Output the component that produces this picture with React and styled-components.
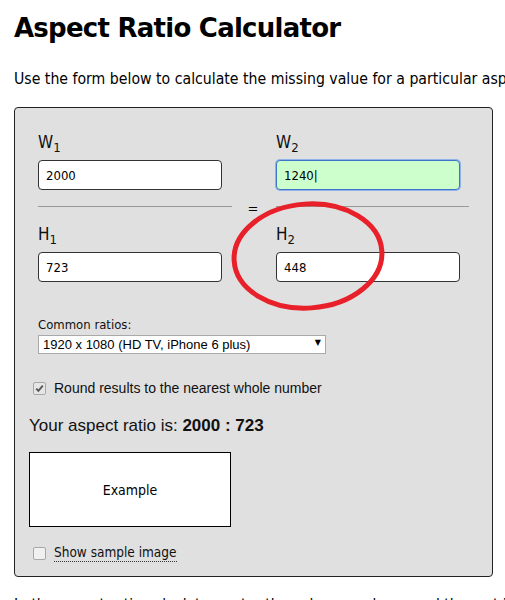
import React from "react";
import styled, { createGlobalStyle } from "styled-components";

const Global = createGlobalStyle`
  html, body { margin: 0; padding: 0; background: #fff; overflow: hidden; }
  body { font-family: "DejaVu Sans", Verdana, sans-serif; color: #000; }
`;

const Page = styled.div`
  position: relative;
  width: 505px;
  height: 600px;
  overflow: hidden;
  padding: 0 0 0 14px;
  box-sizing: border-box;
`;

const Title = styled.h1`
  margin: 0;
  padding-top: 13px;
  font-family: "DejaVu Sans", Verdana, sans-serif;
  font-weight: bold;
  font-size: 26px;
  line-height: 30px;
  letter-spacing: -0.75px;
`;

const Intro = styled.p`
  margin: 27px 0 0;
  font-family: "DejaVu Sans Condensed", "DejaVu Sans", Tahoma, sans-serif;
  font-size: 15.7px;
  line-height: 18px;
  white-space: nowrap;
`;

const Panel = styled.div`
  margin-top: 19px;
  width: 479px;
  box-sizing: border-box;
  background: #e0e0e0;
  border: 1px solid #222;
  border-radius: 4px;
  padding: 24px 0 14px 14px;
`;

const Grid = styled.div`
  display: grid;
  grid-template-columns: 194px 44px 193px;
  margin-left: 9px;
`;

const Field = styled.div`
  display: flex;
  flex-direction: column;
`;

const Label = styled.label`
  font-family: "DejaVu Sans Condensed", "DejaVu Sans", Tahoma, sans-serif;
  font-size: 17px;
  line-height: 20px;
  height: 28px;
  color: #111;
  sub {
    font-size: 13px;
    vertical-align: -4px;
    line-height: 0;
  }
`;

const TextInput = styled.input`
  width: 184px;
  height: 30px;
  box-sizing: border-box;
  border: 1px solid ${(p) => (p.$active ? "#3f75c8" : "#333")};
  border-radius: 4px;
  background: ${(p) => (p.$active ? "#ccffcc" : "#fff")};
  box-shadow: ${(p) => (p.$active ? "0 0 0 1px #8fb2ea" : "none")};
  padding: 0 7px;
  font-family: "DejaVu Sans Condensed", "DejaVu Sans", Tahoma, sans-serif;
  font-size: 13px;
  color: #000;
  outline: none;
`;

const DividerCell = styled.div`
  height: 34px;
  display: flex;
  align-items: center;
  justify-content: ${(p) => (p.$center ? "center" : "flex-start")};
`;

const Line = styled.div`
  width: ${(p) => p.$w}px;
  height: 1px;
  background: #999;
  margin-top: -1px;
`;

const Equals = styled.span`
  font-family: "DejaVu Sans", Verdana, sans-serif;
  font-size: 13px;
  margin-top: 3px;
  margin-left: -2px;
`;

const RatioBlock = styled.div`
  margin: 35px 0 0 9px;
`;

const SmallLabel = styled.div`
  font-family: "DejaVu Sans Condensed", "DejaVu Sans", Tahoma, sans-serif;
  font-size: 13px;
  line-height: 16px;
  color: #111;
  margin-bottom: 1px;
`;

const SelectWrap = styled.div`
  position: relative;
  width: 288px;
`;

const Select = styled.select`
  appearance: none;
  -webkit-appearance: none;
  width: 288px;
  height: 19px;
  box-sizing: border-box;
  border: 1px solid #a9a9a9;
  background: #fff;
  border-radius: 0;
  padding: 0 4px;
  font-family: "Liberation Sans", Arial, sans-serif;
  font-size: 13px;
  color: #000;
`;

const Arrow = styled.span`
  position: absolute;
  right: 5px;
  top: 3px;
  font-size: 8px;
  line-height: 12px;
  pointer-events: none;
`;

const CheckRow = styled.label`
  display: flex;
  align-items: center;
  gap: 8px;
  margin-left: 4px;
  margin-top: ${(p) => p.$mt}px;
  font-family: ${(p) =>
    p.$tahoma
      ? `"DejaVu Sans Condensed", "DejaVu Sans", Tahoma, sans-serif`
      : `"Liberation Sans", Arial, sans-serif`};
  font-size: ${(p) => (p.$tahoma ? "13.5px" : "14px")};
  color: #111;
`;

const Box = styled.span`
  width: 11px;
  height: 11px;
  border: 1px solid #a8a8a8;
  border-radius: 2px;
  background: ${(p) => (p.$checked ? "#e6e6e6" : "#f0f0f0")};
  display: flex;
  align-items: center;
  justify-content: center;
`;

const Dotted = styled.span`
  border-bottom: 1px dotted #333;
  line-height: 17px;
`;

const Result = styled.div`
  margin-top: 20px;
  font-family: "Liberation Sans", Arial, sans-serif;
  font-size: 17px;
  color: #111;
  b { font-weight: bold; }
`;

const Example = styled.div`
  margin-top: 16px;
  width: 202px;
  height: 75px;
  box-sizing: border-box;
  border: 1px solid #000;
  background: #fff;
  display: flex;
  align-items: center;
  justify-content: center;
  font-family: "DejaVu Sans Condensed", "DejaVu Sans", Tahoma, sans-serif;
  font-size: 14px;
`;

const After = styled.p`
  margin: 19px 0 0;
  font-family: "DejaVu Sans Condensed", "DejaVu Sans", Tahoma, sans-serif;
  font-size: 15.5px;
  line-height: 18px;
  white-space: nowrap;
`;

const Annotation = styled.svg`
  position: absolute;
  left: 228px;
  top: 198px;
  pointer-events: none;
`;

const Check = () => (
  <svg width="9" height="9" viewBox="0 0 9 9">
    <path d="M1.2 4.6 L3.4 6.9 L7.8 1.6" fill="none" stroke="#555" strokeWidth="1.8" />
  </svg>
);

export default function App() {
  return (
    <>
      <Global />
      <Page>
        <Title>Aspect Ratio Calculator</Title>
        <Intro>Use the form below to calculate the missing value for a particular aspect ratio.</Intro>
        <Panel>
          <Grid>
            <Field>
              <Label>W<sub>1</sub></Label>
              <TextInput readOnly value="2000" />
            </Field>
            <div />
            <Field>
              <Label>W<sub>2</sub></Label>
              <TextInput readOnly $active value="1240|" />
            </Field>
            <DividerCell><Line $w={194} /></DividerCell>
            <DividerCell $center><Equals>=</Equals></DividerCell>
            <DividerCell><Line $w={193} /></DividerCell>
            <Field>
              <Label>H<sub>1</sub></Label>
              <TextInput readOnly value="723" />
            </Field>
            <div />
            <Field>
              <Label>H<sub>2</sub></Label>
              <TextInput readOnly value="448" />
            </Field>
          </Grid>
          <RatioBlock>
            <SmallLabel>Common ratios:</SmallLabel>
            <SelectWrap>
              <Select defaultValue="1920">
                <option value="1920">1920 x 1080 (HD TV, iPhone 6 plus)</option>
              </Select>
              <Arrow>▼</Arrow>
            </SelectWrap>
          </RatioBlock>
          <CheckRow $mt={26}>
            <Box $checked><Check /></Box>
            Round results to the nearest whole number
          </CheckRow>
          <Result>
            Your aspect ratio is: <b>2000 : 723</b>
          </Result>
          <Example>Example</Example>
          <CheckRow $mt={17} $tahoma>
            <Box />
            <Dotted>Show sample image</Dotted>
          </CheckRow>
        </Panel>
        <After>In the aspect ratio calculator, enter the values you know and the rest is worked out.</After>
        <Annotation width="160" height="120" viewBox="0 0 160 120">
          <ellipse cx="80" cy="58" rx="74" ry="52" fill="none" stroke="#e8202a" strokeWidth="5" transform="rotate(-4 80 58)" />
        </Annotation>
      </Page>
    </>
  );
}
